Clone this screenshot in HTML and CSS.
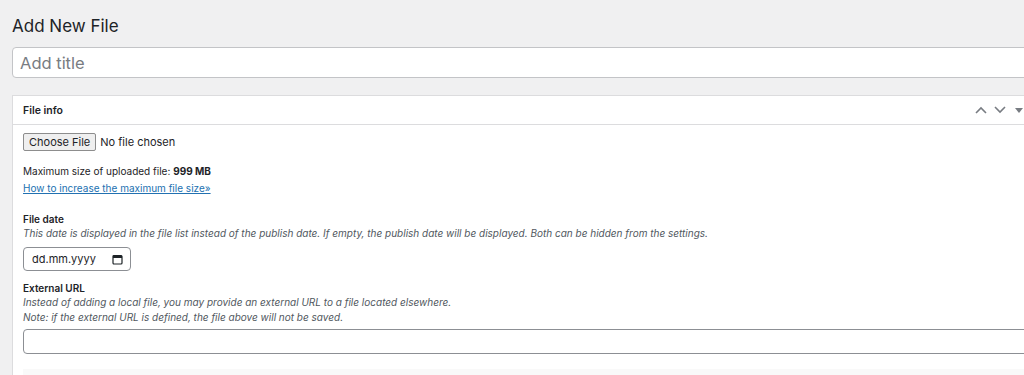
FILE: index.html
```html
<!DOCTYPE html>
<html lang="en">
<head>
    <meta charset="UTF-8">
    <title>Add New File</title>
    <link rel="stylesheet" href="styles.css">
</head>
<body>
    <div class="wrap">
        <h1 class="page-title">Add New File</h1>
        <div class="title-box"><input type="text" class="title-input" placeholder="Add title"></div>

        <div class="postbox">
            <div class="postbox-header">
                <h2>File info</h2>
                <div class="handle-actions">
                    <svg class="chev" width="14" height="10" viewBox="0 0 14 10"><path d="M2 8 L7 3 L12 8" fill="none" stroke="#787c82" stroke-width="1.6"/></svg>
                    <svg class="chev" width="14" height="10" viewBox="0 0 14 10"><path d="M2 2 L7 7 L12 2" fill="none" stroke="#787c82" stroke-width="1.6"/></svg>
                    <svg class="chev" width="14" height="10" viewBox="0 0 14 10"><path d="M3 3 L11 3 L7 8 Z" fill="#787c82"/></svg>
                </div>
            </div>
            <div class="inside">
                <div class="file-row">
                    <button class="choose-btn">Choose File</button>
                    <span class="no-file">No file chosen</span>
                </div>
                <p class="max-size">Maximum size of uploaded file: <strong>999 MB</strong></p>
                <a href="#" class="help-link">How to increase the maximum file size»</a>

                <div class="field">
                    <label class="field-label">File date</label>
                    <p class="desc">This date is displayed in the file list instead of the publish date. If empty, the publish date will be displayed. Both can be hidden from the settings.</p>
                    <div class="date-input">
                        <span>dd.mm.yyyy</span>
                        <svg width="11" height="11" viewBox="0 0 11 11"><rect x="1" y="1.5" width="9" height="8.5" rx="1" fill="none" stroke="#1d2327" stroke-width="1.2"/><rect x="1" y="1.5" width="9" height="2.5" fill="#1d2327"/></svg>
                    </div>
                </div>

                <div class="field field-url">
                    <label class="field-label">External URL</label>
                    <p class="desc">Instead of adding a local file, you may provide an external URL to a file located elsewhere.<br>Note: if the external URL is defined, the file above will not be saved.</p>
                    <input type="text" class="url-input">
                </div>

                <div class="next-box"></div>
            </div>
        </div>
    </div>
</body>
</html>
```

FILE: styles.css
```css
body {
    margin: 0;
    background: #f0f0f1;
    font-family: Inter, "Liberation Sans", sans-serif;
    color: #1d2327;
    overflow: hidden;
    height: 375px;
}

.wrap {
    width: 1040px;
    padding-left: 12px;
}

.page-title {
    font-size: 17px;
    font-weight: 400;
    margin: 0;
    padding-top: 15px;
    line-height: 22px;
}

.title-box {
    margin-top: 10px;
}

.title-input {
    box-sizing: border-box;
    width: 100%;
    height: 31px;
    border: 1px solid #c3c4c7;
    border-radius: 4px;
    background: #fff;
    font-family: inherit;
    font-size: 16.5px;
    padding: 0 7px;
    outline: 0;
}

.title-input::placeholder {
    color: #787c82;
}

.postbox {
    margin-top: 17px;
    background: #fff;
    border: 1px solid #dcdcde;
    border-right: 0;
}

.postbox-header {
    height: 28px;
    border-bottom: 1px solid #dcdcde;
    display: flex;
    align-items: center;
    justify-content: space-between;
}

.postbox-header h2 {
    font-size: 10.5px;
    font-weight: 600;
    margin: 0;
    padding-left: 10px;
}

.handle-actions {
    display: flex;
    gap: 5px;
    margin-right: 26px;
}

.inside {
    padding: 8px 10px 0 10px;
    font-size: 10px;
}

.file-row {
    display: flex;
    align-items: center;
    gap: 4px;
}

.choose-btn {
    font-family: inherit;
    font-size: 11px;
    color: #1d2327;
    background: #efefef;
    border: 1px solid #8d8d8d;
    border-radius: 2px;
    height: 18px;
    padding: 0 5px;
}

.no-file {
    font-size: 11px;
}

.max-size {
    margin: 14px 0 5px 0;
}

.help-link {
    color: #2271b1;
    text-decoration: underline;
}

.field {
    margin-top: 19px;
}

.field-url {
    margin-top: 11px;
}

.field-label {
    display: block;
    font-weight: 600;
}

.desc {
    margin: 1px 0 0 0;
    font-style: italic;
    color: #50575e;
    line-height: 15px;
}

.date-input {
    margin-top: 6px;
    width: 108px;
    height: 24px;
    box-sizing: border-box;
    border: 1px solid #8c8f94;
    border-radius: 4px;
    display: flex;
    align-items: center;
    justify-content: space-between;
    padding: 0 7px 0 8px;
    font-size: 11px;
}

.url-input {
    display: block;
    box-sizing: border-box;
    margin-top: 4px;
    width: 100%;
    height: 25px;
    border: 1px solid #8c8f94;
    border-radius: 4px;
    outline: 0;
}

.next-box {
    margin-top: 15px;
    height: 20px;
    background: #f9f9f9;
}
```
